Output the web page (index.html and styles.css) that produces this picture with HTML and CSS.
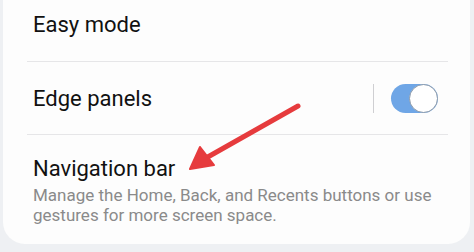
FILE: index.html
```html
<!DOCTYPE html>
<html lang="en">

    <head>
        <meta charset="UTF-8">
        <meta name="viewport" content="width=device-width, initial-scale=1.0">
        <title>Display settings</title>
        <link rel="stylesheet" href="styles.css">
    </head>

    <body>
        <div class="card">
            <div class="row first">
                <span class="title">Easy mode</span>
            </div>
            <div class="divider"></div>
            <div class="row switch-row">
                <span class="title">Edge panels</span>
                <div class="controls">
                    <div class="sep"></div>
                    <div class="toggle on"><div class="knob"></div></div>
                </div>
            </div>
            <div class="divider"></div>
            <div class="row last">
                <span class="title">Navigation bar</span>
                <p class="desc">Manage the Home, Back, and Recents buttons or use gestures for more screen space.</p>
            </div>
        </div>

        <svg class="arrow" width="474" height="252" viewBox="0 0 474 252">
            <line x1="298" y1="106" x2="206" y2="158" stroke="#e63b3d" stroke-width="5" stroke-linecap="round" />
            <polygon points="190,169 200,147 214,165" fill="#e63b3d" stroke="#e63b3d" stroke-width="2" stroke-linejoin="round" />
        </svg>
    </body>

</html>
```

FILE: styles.css
```css
body {
    font-family: Roboto, "Noto Sans", sans-serif;
    background-color: #eef0f3;
    margin: 0;
    width: 474px;
    height: 252px;
    overflow: hidden;
    position: relative;
}

.card {
    background: #fdfdfd;
    margin-left: 3px;
    width: 467px;
    border-radius: 0 0 22px 22px;
}

.row {
    padding: 0 22px 0 30px;
}

.title {
    font-size: 22px;
    color: #111;
    display: block;
}

.first {
    height: 61px;
    padding-top: 12px;
    box-sizing: border-box;
}

.divider {
    height: 1px;
    background: #e6e6e8;
    margin: 0 22px 0 24px;
}

.switch-row {
    height: 72px;
    display: flex;
    align-items: center;
    justify-content: space-between;
}

.controls {
    display: flex;
    align-items: center;
    margin-right: 10px;
}

.sep {
    width: 1px;
    height: 29px;
    background: #cfcfd2;
    margin-right: 17px;
}

.toggle {
    width: 47px;
    height: 29px;
    border-radius: 15px;
    background: #6fa6e6;
    position: relative;
}

.knob {
    position: absolute;
    right: 0;
    top: 0;
    width: 27px;
    height: 27px;
    border-radius: 50%;
    background: #fff;
    border: 1px solid #8c9aaa;
}

.last {
    height: 109px;
    padding-top: 21px;
    box-sizing: border-box;
}

.desc {
    margin: 4px 0 0;
    font-size: 17px;
    line-height: 20px;
    color: #8a8a8a;
}

.arrow {
    position: absolute;
    left: 0;
    top: 0;
}
```
